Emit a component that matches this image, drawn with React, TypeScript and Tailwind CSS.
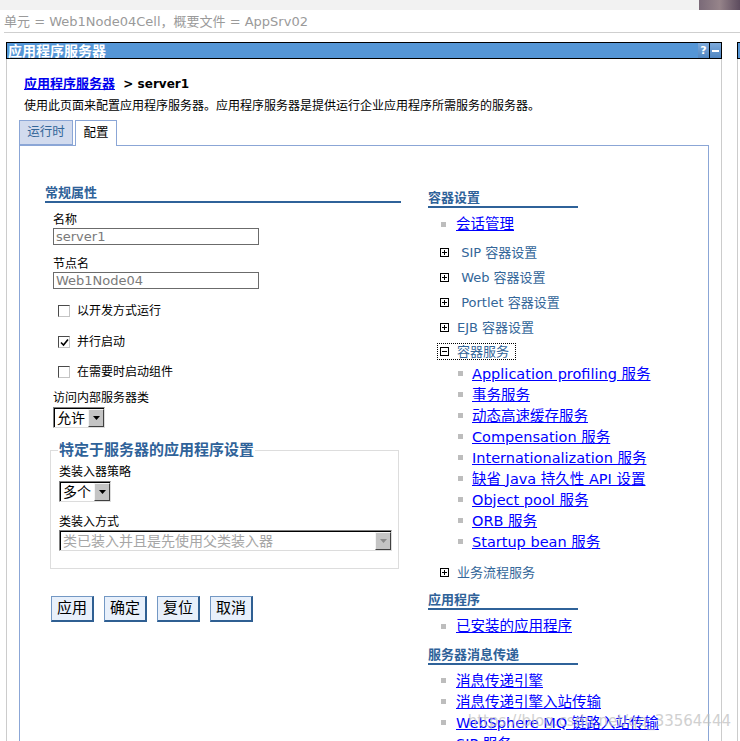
import type { ReactNode } from 'react';

// Classic WebSphere admin console panel: "应用程序服务器 > server1"

function Checkbox({ checked }: { checked?: boolean }) {
  return (
    <span className="flex items-center justify-center w-[12px] h-[12px] border border-t-[#4a4a4a] border-l-[#4a4a4a] border-r-[#c4c4c4] border-b-[#c4c4c4] bg-white">
      {checked && (
        <svg width="9" height="9" viewBox="0 0 9 9">
          <polyline points="1,4.5 3.5,7 8,1.5" fill="none" stroke="#000" strokeWidth="1.6" />
        </svg>
      )}
    </span>
  );
}

function Select({ value, className, disabled }: { value: string; className: string; disabled?: boolean }) {
  return (
    <div className={`flex h-[21px] border border-t-[#808080] border-l-[#808080] border-r-[#dcdcdc] border-b-[#dcdcdc] bg-white ${className}`}>
      <div className="flex flex-1 border-t border-l border-black">
        <div className={`flex-1 flex items-center pl-[2px] text-[14px] leading-none ${disabled ? 'text-[#a6a6a6]' : 'text-black'}`}>
          {value}
        </div>
        <div className="w-[16px] flex items-center justify-center bg-[#c4c4c4] border border-t-[#f4f4f4] border-l-[#f4f4f4] border-r-[#404040] border-b-[#404040]">
          <svg width="7" height="4" viewBox="0 0 7 4">
            <polygon points="0,0 7,0 3.5,4" fill={disabled ? '#8a8a8a' : '#000'} />
          </svg>
        </div>
      </div>
    </div>
  );
}

function BoxIcon({ open }: { open?: boolean }) {
  return (
    <svg width="9" height="9" viewBox="0 0 9 9" className="shrink-0">
      <rect x="0.5" y="0.5" width="8" height="8" fill="#fff" stroke="#000" />
      <line x1="2" y1="4.5" x2="7" y2="4.5" stroke="#000" />
      {!open && <line x1="4.5" y1="2" x2="4.5" y2="7" stroke="#000" />}
    </svg>
  );
}

function Bullet() {
  return <span className="w-[5px] h-[5px] bg-[#bdbdbd] shrink-0" />;
}

function SectionHead({ children, className }: { children: ReactNode; className: string }) {
  return (
    <div className={`text-[13px] font-bold leading-[17px] text-[#2f6299] border-b-2 border-[#2f6299] ${className}`}>
      {children}
    </div>
  );
}

function Link({ children }: { children: ReactNode }) {
  return <a className="text-[14.5px] leading-[18px] text-[#0000ff] underline whitespace-nowrap cursor-pointer">{children}</a>;
}

function TopLink({ children, className = '' }: { children: ReactNode; className?: string }) {
  return (
    <div className={`flex items-center h-[22px] pl-[13px] gap-[10px] ${className}`}>
      <Bullet />
      <Link>{children}</Link>
    </div>
  );
}

function SubLink({ children }: { children: ReactNode }) {
  return (
    <div className="flex items-center h-[21px] pl-[30px] gap-[9px]">
      <Bullet />
      <Link>{children}</Link>
    </div>
  );
}

function TreeRow({ children, className = '' }: { children: ReactNode; className?: string }) {
  return (
    <div className={`flex items-center h-[25px] pl-[9px] ${className}`}>
      <div className="flex items-center gap-[8px] h-[17px] px-[2px] border border-dotted border-transparent">
        <BoxIcon />
        <span className="text-[13px] leading-none text-[#336699] whitespace-nowrap pr-[1px]">{children}</span>
      </div>
    </div>
  );
}

function ActionButton({ children }: { children: ReactNode }) {
  return (
    <button className="w-[43px] h-[26px] bg-[#e8f0fb] border border-t-[#7398c4] border-l-[#7398c4] border-r-2 border-b-2 border-r-[#2f5f92] border-b-[#2f5f92] text-[15px] leading-none text-black">
      {children}
    </button>
  );
}

function Field({ label, value }: { label: string; value: string }) {
  return (
    <>
      <div className="text-[12px] leading-[16px] pt-[1px]">{label}</div>
      <div className="w-[206px] h-[17px] border border-[#6b6b6b] flex items-center pl-[2px] text-[13px] leading-none text-[#7a7a7a]">
        {value}
      </div>
    </>
  );
}

function CheckRow({ label, checked, className }: { label: string; checked?: boolean; className: string }) {
  return (
    <div className={`flex items-center h-[16px] ml-[5px] gap-[7px] ${className}`}>
      <Checkbox checked={checked} />
      <span className="text-[12px] leading-none">{label}</span>
    </div>
  );
}

export default function App() {
  return (
    <div className="relative w-[740px] h-[741px] overflow-hidden bg-white text-black font-['DejaVu_Sans','Noto_Sans_CJK_SC',sans-serif]">
      {/* top strip */}
      <div className="h-[10px] bg-[#f2f2f2] flex justify-end">
        <div className="w-[41px] h-full bg-gradient-to-r from-[#7a6a78] via-[#96848a] to-[#5d4c5e]" />
      </div>
      <div className="h-[22px] pl-[4px] pt-[4px] text-[13px] leading-[16px] text-[#9a9a9a] whitespace-nowrap">
        单元 = Web1Node04Cell，概要文件 = AppSrv02
      </div>
      <div className="ml-[4px] border-t border-[#cfcfcf]" />

      <div className="mt-[9px] flex">
        {/* main panel */}
        <div className="ml-[6px] w-[716px] shrink-0">
          <div className="h-[17px] border border-black bg-[#5596d6] flex items-stretch justify-between">
            <div className="pl-[1px] flex items-center text-[14px] font-bold leading-none text-white">应用程序服务器</div>
            <div className="flex">
              <div className="w-[11px] flex items-center justify-center bg-gradient-to-b from-[#7eaadb] to-[#4f86c2] text-white text-[11px] font-bold leading-none">?</div>
              <div className="w-[12px] border-l border-black flex items-center justify-center bg-gradient-to-b from-[#7eaadb] to-[#4f86c2]">
                <span className="w-[7px] h-[2px] bg-white" />
              </div>
            </div>
          </div>

          <div className="h-[700px] border-x border-[#cccccc] px-[12px]">
            <div className="pt-[17px] pl-[5px] text-[13px] leading-[16px] whitespace-nowrap">
              <a className="font-bold text-[#0000ee] underline">应用程序服务器</a>
              <span className="font-bold text-[12px]">&nbsp;&nbsp;&gt; server1</span>
            </div>
            <div className="mt-[6px] pl-[5px] text-[12px] leading-[16px] whitespace-nowrap">
              使用此页面来配置应用程序服务器。应用程序服务器是提供运行企业应用程序所需服务的服务器。
            </div>

            {/* tabs */}
            <div className="mt-[6px] flex items-end h-[25px]">
              <div className="h-[25px] w-[54px] border border-[#8ba6d6] bg-[#d2dbee] flex items-center justify-center text-[12.5px] leading-none text-[#336699]">
                运行时
              </div>
              <div className="relative z-10 ml-[2px] -mb-px h-[26px] w-[42px] border border-b-0 border-[#8ba6d6] bg-white flex items-center justify-center pb-[1px] text-[12.5px] leading-none">
                配置
              </div>
            </div>

            <div className="h-[600px] border border-b-0 border-[#8ba6d6] flex pl-[25px] pt-[38px]">
              {/* left column */}
              <div className="w-[356px] shrink-0">
                <SectionHead className="leading-[16px]">常规属性</SectionHead>
                <div className="pl-[8px]">
                  <div className="mt-[8px]">
                    <Field label="名称" value="server1" />
                  </div>
                  <div className="mt-[10px]">
                    <Field label="节点名" value="Web1Node04" />
                  </div>
                  <CheckRow className="mt-[14px]" label="以开发方式运行" />
                  <CheckRow className="mt-[15px]" label="并行启动" checked />
                  <CheckRow className="mt-[14px]" label="在需要时启动组件" />
                  <div className="mt-[10px] text-[12px] leading-[16px]">访问内部服务器类</div>
                  <Select className="mt-[1px] w-[52px]" value="允许" />
                </div>

                <fieldset className="mt-[13px] ml-[5px] w-[349px] border border-[#dddddd] pl-[8px] pb-[17px]">
                  <legend className="px-[1px] -ml-[1px] text-[15px] font-bold leading-[18px] text-[#2f6299]">
                    特定于服务器的应用程序设置
                  </legend>
                  <div className="mt-[5px] text-[12px] leading-[16px]">类装入器策略</div>
                  <Select className="mt-[1px] w-[52px]" value="多个" />
                  <div className="mt-[12px] text-[12px] leading-[16px]">类装入方式</div>
                  <Select className="w-[333px]" value="类已装入并且是先使用父类装入器" disabled />
                </fieldset>

                <div className="mt-[27px] ml-[6px] flex gap-[10px]">
                  <ActionButton>应用</ActionButton>
                  <ActionButton>确定</ActionButton>
                  <ActionButton>复位</ActionButton>
                  <ActionButton>取消</ActionButton>
                </div>
              </div>

              {/* right column */}
              <div className="ml-[27px] mt-[5px] flex-1">
                <SectionHead className="w-[150px]">容器设置</SectionHead>
                <TopLink className="mt-[5px]">会话管理</TopLink>
                <TreeRow className="mt-[5px]">&nbsp;SIP 容器设置</TreeRow>
                <TreeRow>&nbsp;Web 容器设置</TreeRow>
                <TreeRow>&nbsp;Portlet 容器设置</TreeRow>
                <TreeRow>EJB 容器设置</TreeRow>
                <div className="flex items-center h-[23px] pl-[9px]">
                  <div className="flex items-center gap-[8px] h-[17px] px-[2px] border border-dotted border-black">
                    <BoxIcon open />
                    <span className="text-[13px] leading-none text-[#336699] whitespace-nowrap pr-[4px]">容器服务</span>
                  </div>
                </div>
                <SubLink>Application profiling 服务</SubLink>
                <SubLink>事务服务</SubLink>
                <SubLink>动态高速缓存服务</SubLink>
                <SubLink>Compensation 服务</SubLink>
                <SubLink>Internationalization 服务</SubLink>
                <SubLink>缺省 Java 持久性 API 设置</SubLink>
                <SubLink>Object pool 服务</SubLink>
                <SubLink>ORB 服务</SubLink>
                <SubLink>Startup bean 服务</SubLink>
                <TreeRow className="mt-[8px]">业务流程服务</TreeRow>

                <SectionHead className="mt-[6px] w-[150px]">应用程序</SectionHead>
                <TopLink className="mt-[5px]">已安装的应用程序</TopLink>

                <SectionHead className="mt-[9px] w-[150px]">服务器消息传递</SectionHead>
                <div className="mt-[5px]">
                  <div className="flex items-center h-[21px] pl-[13px] gap-[10px]"><Bullet /><Link>消息传递引擎</Link></div>
                  <div className="flex items-center h-[21px] pl-[13px] gap-[10px]"><Bullet /><Link>消息传递引擎入站传输</Link></div>
                  <div className="flex items-center h-[21px] pl-[13px] gap-[10px]"><Bullet /><Link>WebSphere MQ 链路入站传输</Link></div>
                  <div className="flex items-center h-[21px] pl-[13px] gap-[10px]"><Bullet /><Link>SIP 服务</Link></div>
                </div>
              </div>
            </div>
          </div>
        </div>

        {/* next panel, cut off at the edge */}
        <div className="ml-[15px] flex-1">
          <div className="h-[17px] border-y border-l border-black bg-[#5596d6]" />
          <div className="h-[700px] border-l border-[#cccccc]" />
        </div>
      </div>

      {/* blog watermark */}
      <div className="absolute right-[9px] top-[711px] text-[15px] leading-[20px] text-[#bdbdbd] opacity-70 whitespace-nowrap pointer-events-none">
        https://blog.csdn.net/qq_33564444
      </div>
    </div>
  );
}
